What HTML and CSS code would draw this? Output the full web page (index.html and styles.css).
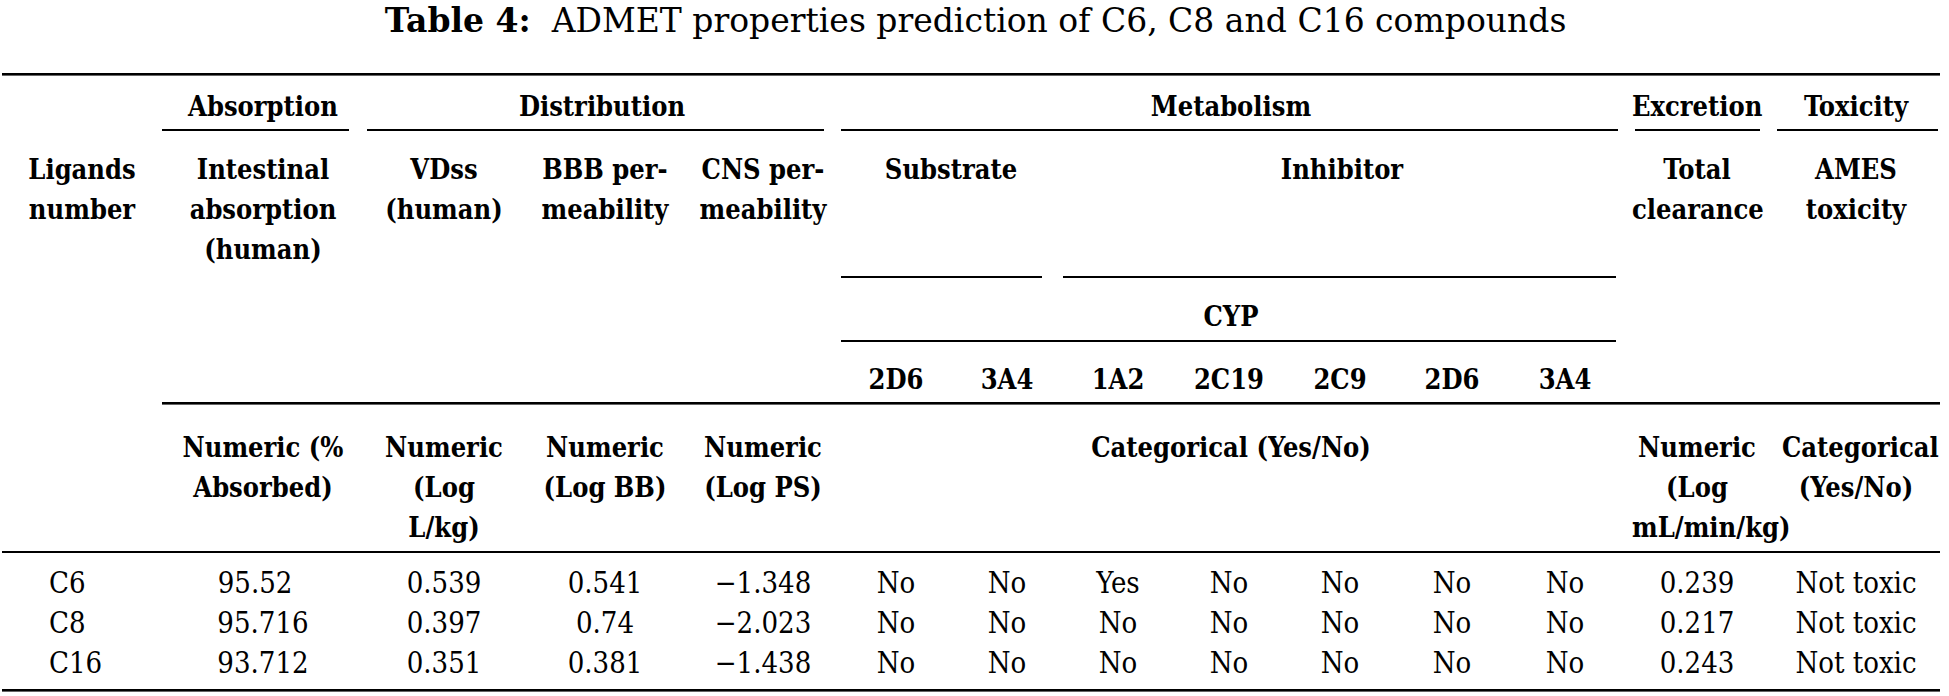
FILE: index.html
```html
<!DOCTYPE html>
<html>
<head>
<meta charset="utf-8">
<link rel="stylesheet" href="styles.css">
</head>
<body>
<div class="page">
  <h1 class="title"><b>Table 4:</b>&nbsp; ADMET properties prediction of C6, C8 and C16 compounds</h1>
  <div class="tbl">
    <div class="heavy r1 all"></div>

    <div class="hd r2 k2">Absorption</div>
    <div class="hd r2 k3-5">Distribution</div>
    <div class="hd r2 k6-12">Metabolism</div>
    <div class="hd r2 k13">Excretion</div>
    <div class="hd r2 k14">Toxicity</div>

    <div class="cmid r3 k2 u-abs"></div>
    <div class="cmid r3 k3-5 u-dis"></div>
    <div class="cmid r3 k6-12 u-met"></div>
    <div class="cmid r3 k13 u-exc"></div>
    <div class="cmid r3 k14 u-tox"></div>

    <div class="hd r4 k1">Ligands<br>number</div>
    <div class="hd r4 k2">Intestinal<br>absorption<br>(human)</div>
    <div class="hd r4 k3">VDss<br>(human)</div>
    <div class="hd r4 k4">BBB per-<br>meability</div>
    <div class="hd r4 k5">CNS per-<br>meability</div>
    <div class="hd r4 k6-7">Substrate</div>
    <div class="hd r4 k8-12">Inhibitor</div>
    <div class="hd r4 k13">Total<br>clearance</div>
    <div class="hd r4 k14">AMES<br>toxicity</div>

    <div class="cmid r5 k6-7 u-sub"></div>
    <div class="cmid r5 k8-12 u-inh"></div>

    <div class="hd r6 k6-12">CYP</div>

    <div class="cmid r7 k6-12 u-cyp"></div>

    <div class="hd r8 k6">2D6</div>
    <div class="hd r8 k7">3A4</div>
    <div class="hd r8 k8">1A2</div>
    <div class="hd r8 k9">2C19</div>
    <div class="hd r8 k10">2C9</div>
    <div class="hd r8 k11">2D6</div>
    <div class="hd r8 k12">3A4</div>

    <div class="mid r9 k2-14"></div>

    <div class="hd r10 k2">Numeric (%<br>Absorbed)</div>
    <div class="hd r10 k3">Numeric<br>(Log<br>L/kg)</div>
    <div class="hd r10 k4">Numeric<br>(Log BB)</div>
    <div class="hd r10 k5">Numeric<br>(Log PS)</div>
    <div class="hd r10 k6-12">Categorical (Yes/No)</div>
    <div class="hd r10 k13">Numeric<br>(Log<br>mL/min/kg)</div>
    <div class="hd r10 k14">Categorical<br>(Yes/No)</div>

    <div class="mid r11 all"></div>

    <div class="dt r12 k1 lig">C6<br>C8<br>C16</div>
    <div class="dt r12 k2"><span class="ph">95.52</span><br>95.716<br>93.712</div>
    <div class="dt r12 k3">0.539<br>0.397<br>0.351</div>
    <div class="dt r12 k4">0.541<br>0.74<br>0.381</div>
    <div class="dt r12 k5">&minus;1.348<br>&minus;2.023<br>&minus;1.438</div>
    <div class="dt r12 k6">No<br>No<br>No</div>
    <div class="dt r12 k7">No<br>No<br>No</div>
    <div class="dt r12 k8">Yes<br>No<br>No</div>
    <div class="dt r12 k9">No<br>No<br>No</div>
    <div class="dt r12 k10">No<br>No<br>No</div>
    <div class="dt r12 k11">No<br>No<br>No</div>
    <div class="dt r12 k12">No<br>No<br>No</div>
    <div class="dt r12 k13">0.239<br>0.217<br>0.243</div>
    <div class="dt r12 k14">Not toxic<br>Not toxic<br>Not toxic</div>

    <div class="heavy r13 all"></div>
  </div>
</div>
</body>
</html>
```

FILE: styles.css
```css
html, body {
  margin: 0;
  padding: 0;
  background: #ffffff;
}

body {
  font-family: "DejaVu Serif", serif;
  color: #000000;
  width: 1949px;
  height: 696px;
  overflow: hidden;
}

.page {
  padding-left: 2px;
}

.title {
  margin: 0;
  padding-top: 1px;
  height: 72px;
  font-family: "DejaVu Serif", serif;
  font-size: 33px;
  line-height: 40px;
  font-weight: normal;
  text-align: center;
  white-space: nowrap;
}

.title b {
  font-weight: bold;
}

.tbl {
  display: grid;
  grid-template-columns: 160px 202px 160px 162px 154px 112px 110px 112px 110px 112px 112px 114px 150px 168px;
  grid-template-rows: 3px 53px 2px 145px 2px 62px 2px 60px 3px 146px 2px 136px 3px;
  width: 1938px;
}

.hd, .dt {
  font-family: "DejaVu Serif Condensed", "DejaVu Serif", serif;
  font-stretch: condensed;
  line-height: 40px;
  text-align: center;
  padding: 0 10px;
  white-space: nowrap;
}

.hd {
  font-weight: bold;
  font-size: 27px;
}

.dt {
  font-weight: normal;
  font-size: 29px;
  padding-top: 10px;
}

.dt.lig {
  text-align: left;
  padding-left: 47px;
}

.ph {
  padding-right: 0.55em;
}

/* rules */
.heavy {
  background: #000000;
  border-bottom: 1px solid #666666;
  box-sizing: border-box;
}

.mid {
  background: #000000;
}

.r9.mid {
  border-bottom: 1px solid #666666;
  box-sizing: border-box;
}

.cmid {
  background: #000000;
}

.u-abs { margin: 0 15px 0 0; }
.u-dis { margin: 0 16px 0 3px; }
.u-met { margin: 0 4px 0 1px; }
.u-exc { margin: 0 12px 0 13px; }
.u-tox { margin: 0 2px 0 5px; }
.u-sub { margin: 0 20px 0 1px; }
.u-inh { margin: 0 6px 0 1px; }
.u-cyp { margin: 0 6px 0 1px; }

/* rows */
.r1 { grid-row: 1; }
.r2 { grid-row: 2; padding-top: 11px; }
.r3 { grid-row: 3; }
.r4 { grid-row: 4; padding-top: 19px; }
.r5 { grid-row: 5; }
.r6 { grid-row: 6; padding-top: 19px; }
.r7 { grid-row: 7; }
.r8 { grid-row: 8; padding-top: 18px; }
.r9 { grid-row: 9; }
.r10 { grid-row: 10; padding-top: 23px; }
.r11 { grid-row: 11; }
.r12 { grid-row: 12; }
.r13 { grid-row: 13; }

/* columns */
.all { grid-column: 1 / 15; }
.k1 { grid-column: 1; }
.k2 { grid-column: 2; }
.k3 { grid-column: 3; }
.k4 { grid-column: 4; }
.k5 { grid-column: 5; }
.k6 { grid-column: 6; }
.k7 { grid-column: 7; }
.k8 { grid-column: 8; }
.k9 { grid-column: 9; }
.k10 { grid-column: 10; }
.k11 { grid-column: 11; }
.k12 { grid-column: 12; }
.k13 { grid-column: 13; }
.k14 { grid-column: 14; }
.k3-5 { grid-column: 3 / 6; }
.k6-7 { grid-column: 6 / 8; }
.k8-12 { grid-column: 8 / 13; }
.k6-12 { grid-column: 6 / 13; }
.k2-14 { grid-column: 2 / 15; }
```
